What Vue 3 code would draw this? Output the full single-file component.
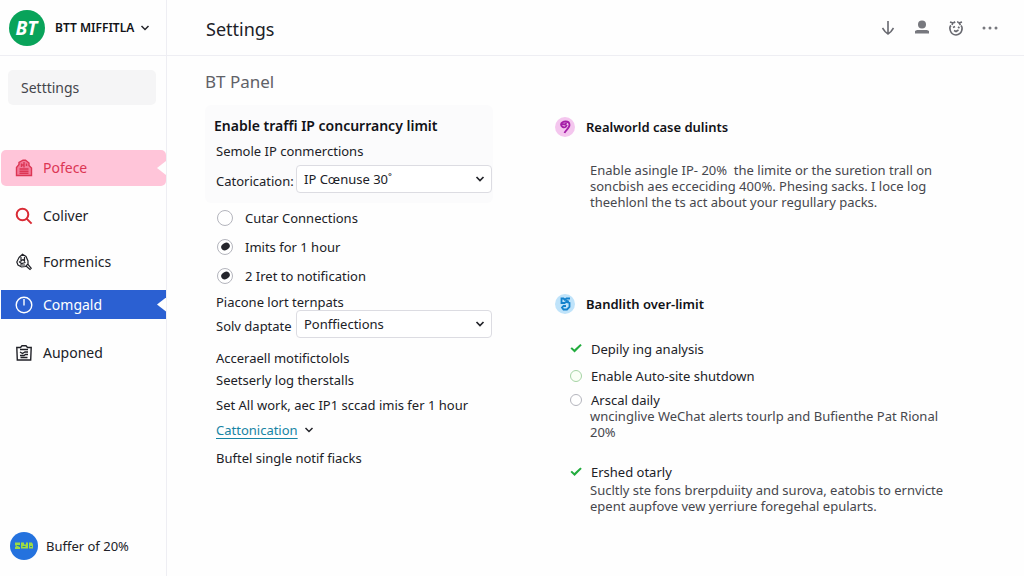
<script setup>
import { ref } from 'vue'

const nav = [
  { label: 'Pofece', icon: 'bag', tone: 'pink' },
  { label: 'Coliver', icon: 'search', tone: 'plain' },
  { label: 'Formenics', icon: 'inspect', tone: 'plain' },
  { label: 'Comgald', icon: 'clock', tone: 'blue' },
  { label: 'Auponed', icon: 'board', tone: 'plain' },
]

const radios = ref([
  { label: 'Cutar Connections', on: false },
  { label: 'Imits for 1 hour', on: true },
  { label: '2 Iret to notification', on: true },
])

const category = ref('IP Cœnuse 30˚')
const template = ref('Ponffiections')
</script>

<template>
  <div class="app">
    <aside class="sidebar">
      <button class="brand" type="button">
        <svg class="logo" viewBox="0 0 36 36" aria-hidden="true">
          <circle cx="18" cy="18" r="18" fill="#09a35a" />
          <text x="17.500" y="25" text-anchor="middle" class="logo-text">BT</text>
        </svg>
        <span>BTT MIFFITLA</span>
        <svg class="chev" viewBox="0 0 10 10" aria-hidden="true"><path d="M1.500 3 5 6.500 8.500 3" /></svg>
      </button>

      <a class="side-title" href="#settings">Setttings</a>

      <nav class="nav">
        <a v-for="n in nav" :key="n.label" href="#" :class="['item', n.tone]">
          <svg v-if="n.icon === 'bag'" class="ico" viewBox="0 0 18 18" aria-hidden="true">
            <path d="M1.500 16.500V8.500L4 5.500V3.500L8 1.200h2.500l3.500 2.800v2.500L16.500 9v7.500z" fill="#f27b9a" />
            <path d="M4.500 10h9M4.500 12.200h9M4.500 14.300h9M6.500 4.500v3.500M9 3v5.500M11.500 4.500V7M6.500 6h3" />
          </svg>
          <svg v-else-if="n.icon === 'search'" class="ico red" viewBox="0 0 18 18" aria-hidden="true">
            <circle cx="7.500" cy="7.500" r="5.800" /><path d="m11.600 11.600 5 5" />
          </svg>
          <svg v-else-if="n.icon === 'inspect'" class="ico thin" viewBox="0 0 18 18" aria-hidden="true">
            <path d="M4 4.500 7.500 1.200 11 3.500l2 4.500v3l-2.500 2.500-4 .5-3.500-2L1.800 9z" />
            <path d="M6 4v4l2-1.500L9.500 8V4M4 8.500l2.500 2 4-1M5 12h5M11 13l4 3.500 1.200-1.200-3.200-4" />
          </svg>
          <svg v-else-if="n.icon === 'clock'" class="ico" viewBox="0 0 18 18" aria-hidden="true">
            <circle cx="9" cy="9" r="7.800" /><path d="M9 3v6.500" />
          </svg>
          <svg v-else class="ico" viewBox="0 0 18 18" aria-hidden="true">
            <path d="M1.800 3.500h3.700L7 1.800h4l1.500 1.700h3.700l-.5 12.500H2.300z" />
            <path d="M5 5.500h8M5 8l2.500 1.500L10 8h3M5 11.500h4l1.500-1h2.500M5.500 13.500h7" />
          </svg>
          <span>{{ n.label }}</span>
        </a>
      </nav>

      <div class="account">
        <svg class="avatar" viewBox="0 0 28 28" aria-hidden="true">
          <circle cx="14" cy="14" r="14" fill="#2472de" />
          <path d="M5 10.500h5v3l-2 1.500h2v2H5v-2l2-1.500H5zM11 10.500h3v2h2v-2h2v6h-7zM19 10.500h3l1 2v4h-4z" fill="#9ddb45" />
          <path d="M7 13.500h3M12.500 14.500h3M20 14.500h2" stroke="#2a8a9a" />
        </svg>
        <span>Buffer of 20%</span>
      </div>
    </aside>

    <main class="main">
      <header class="top">
        <h1>Settings</h1>
        <div class="tools">
          <button type="button" aria-label="Download">
            <svg viewBox="0 0 16 16"><path class="ln" d="M8 1v13M2.500 8 5 11.500l3 2.500 3-2.500L13.500 8" /></svg>
          </button>
          <button type="button" aria-label="Profile">
            <svg viewBox="0 0 16 16"><circle cx="8" cy="4.500" r="4" /><path d="M3 10h10l2 1v2.500H1V11z" /></svg>
          </button>
          <button type="button" aria-label="Assistant">
            <svg viewBox="0 0 16 16">
              <path class="ln" d="M3 5.500C1 7 1.500 14.500 8 15c6.500-.5 7-7.500 5-9.500M2 2l3 1-1 2M14 2l-3 1 1.500 2M6 1.500l1 1.500M9 2h1.500M5 7.500l2-1M10 7l1.500 1M6 10.500l2 1 2.500-1.500" />
            </svg>
          </button>
          <button type="button" aria-label="More">
            <svg viewBox="0 0 16 16"><circle cx="2" cy="8" r="1.500" /><circle cx="8" cy="8" r="1.500" /><circle cx="14" cy="8" r="1.500" /></svg>
          </button>
        </div>
      </header>

      <div class="content">
        <section class="left">
          <h2>BT Panel</h2>
          <div class="card">
            <h3>Enable traffi IP concurrancy limit</h3>
            <p>Semole IP conmerctions</p>
            <div class="field">
              <label for="cat">Catorication:</label>
              <span class="pick">
                <select id="cat" v-model="category"><option>IP Cœnuse 30˚</option></select>
                <svg class="chev" viewBox="0 0 10 10" aria-hidden="true"><path d="M1.500 3 5 6.500 8.500 3" /></svg>
              </span>
            </div>
          </div>

          <div class="group">
            <label v-for="(r, i) in radios" :key="r.label" class="radio">
              <input type="radio" :name="'limit' + i" :checked="r.on" />
              <span>{{ r.label }}</span>
            </label>
            <p class="caption">Piacone lort ternpats</p>
            <div class="field">
              <label for="tpl">Solv daptate</label>
              <span class="pick">
                <select id="tpl" v-model="template"><option>Ponffiections</option></select>
                <svg class="chev" viewBox="0 0 10 10" aria-hidden="true"><path d="M1.500 3 5 6.500 8.500 3" /></svg>
              </span>
            </div>
            <div class="lines">
              <p>Acceraell motifictolols</p>
              <p>Seetserly log therstalls</p>
              <p class="gap">Set All work, aec IP1 sccad imis fer 1 hour</p>
              <p class="gap">
                <a href="#">Cattonication</a>
                <svg class="chev" viewBox="0 0 10 10" aria-hidden="true"><path d="M1.500 3 5 6.500 8.500 3" /></svg>
              </p>
              <p class="wide">Buftel single notif fiacks</p>
            </div>
          </div>
        </section>

        <section class="right">
          <article class="case">
            <h3>
              <svg class="badge" viewBox="0 0 22 22" aria-hidden="true">
                <circle cx="11" cy="11" r="10" fill="#f4c6ee" />
                <path d="M10.500 17c.5-2 5-5 5-8 0-2.500-2-3.500-4-3.500S7 6.500 7 8.500s2.500 3.500 4.500 2.500L13 9M8 8l3 .5L12.500 7" fill="none" stroke="#a51fa8" stroke-width="1.800" />
              </svg>
              Realworld case dulints
            </h3>
            <p class="body">
              Enable asingle IP- 20%&nbsp; the limite or the suretion trall on<br />
              soncbish aes ecceciding 400%. Phesing sacks. I loce log<br />
              theehlonl the ts act about your regullary packs.
            </p>
          </article>

          <article>
            <h3>
              <svg class="badge" viewBox="0 0 22 22" aria-hidden="true">
                <circle cx="11" cy="11" r="10" fill="#bfe3fa" />
                <path d="M16 5.500h-3.500L11 7 9.500 5.500H7.500V10h3l1.500-1 3.500 1v4L13 16.500H9.500L8 14.500l1.500-1.500H12M12 7.500l3 1" fill="none" stroke="#1482cc" stroke-width="1.800" />
              </svg>
              Bandlith over-limit
            </h3>
            <div class="checks">
              <label><input type="checkbox" checked /><span>Depily ing analysis</span></label>
              <label class="green"><input type="checkbox" /><span>Enable Auto-site shutdown</span></label>
              <label class="tight"><input type="checkbox" /><span>Arscal daily</span></label>
              <p>wncinglive WeChat alerts tourlp and Bufienthe Pat Rional<br />20%</p>
              <label class="last"><input type="checkbox" checked /><span>Ershed otarly</span></label>
              <p>Sucltly ste fons brerpduiity and surova, eatobis to ernvicte<br />epent aupfove vew yerriure foregehal epularts.</p>
            </div>
          </article>
        </section>
      </div>
    </main>
  </div>
</template>

<style>
body { margin: 0; }
</style>

<style scoped>
.app {
  display: flex;
  min-height: 100vh;
  background: #fefefe;
  color: #202127;
  font: 13px/20px "Noto Sans", "Open Sans", sans-serif;
}
h1, h2, h3, p { margin: 0; font-weight: 400; }
a { color: inherit; text-decoration: none; }
button { border: 0; padding: 0; background: none; font: inherit; color: inherit; }
.chev { width: 10px; height: 10px; fill: none; stroke: #23242a; stroke-width: 1.5px; }

.sidebar {
  flex: 0 0 166px;
  display: flex;
  flex-direction: column;
  border-right: 1px solid #eeeef3;
}
.brand {
  display: flex;
  align-items: center;
  height: 56px;
  padding-left: 9px;
  border-bottom: 1px solid #eeeef3;
  font-size: 12px;
  font-weight: 600;
  color: #111217;
  white-space: nowrap;
}
.brand span { margin: 0 6px 0 10px; }
.logo { width: 36px; height: 36px; flex: none; }
.logo-text { font: italic 700 19px "Open Sans", sans-serif; fill: #fff; }
.side-title {
  margin: 14px 10px 0 8px;
  padding: 0 13px;
  border-radius: 5px;
  background: #f5f5f6;
  color: #44454b;
  font-size: 14px;
  line-height: 35px;
}
.nav { display: flex; flex-direction: column; padding: 45px 0 0 1px; }
.item {
  position: relative;
  display: flex;
  align-items: center;
  gap: 10px;
  height: 29px;
  margin-bottom: 17px;
  padding-left: 14px;
  font-size: 14px;
}
.item:nth-child(3) { margin-bottom: 14px; }
.ico { width: 18px; height: 18px; fill: none; stroke: currentColor; stroke-width: 1.4px; }
.ico.thin { stroke-width: 1.2px; }
.ico.red { stroke: #d92b35; stroke-width: 2px; }
.pink { height: 36px; margin-bottom: 15px; border-radius: 5px; background: #ffc5d9; color: #dc3654; }
.blue { margin-bottom: 19px; background: #2b60d2; color: #fff; }
.pink::after, .blue::after {
  content: "";
  position: absolute;
  right: 0;
  top: calc(50% - 7px);
  width: 9px;
  height: 14px;
  background: #fefefe;
  clip-path: polygon(0 50%, 100% 0, 100% 100%);
}
.account { display: flex; align-items: center; gap: 8px; margin-top: auto; padding: 0 0 16px 10px; white-space: nowrap; }
.avatar { width: 28px; height: 28px; }

.main { flex: 1; min-width: 0; }
.top {
  display: flex;
  align-items: center;
  justify-content: space-between;
  height: 55px;
  padding: 0 26px 0 39px;
  border-bottom: 1px solid #eeeef3;
}
h1 { font-size: 18px; line-height: 24px; padding-top: 3px; }
.tools { display: flex; gap: 18px; }
.tools button { width: 16px; height: 16px; }
.tools svg { display: block; width: 16px; height: 16px; fill: #77787e; }
.tools .ln { fill: none; stroke: #686970; stroke-width: 1.6px; }

.content { display: flex; gap: 61px; padding: 14px 25px 24px 38px; }
.left { flex: 0 0 288px; }
h2 { font-size: 17px; line-height: 24px; color: #606167; }
.card { margin-top: 11px; padding: 10px 1px 10px 9px; border-radius: 6px; background: #fbfbfc; }
h3 { font-size: 14px; line-height: 22px; font-weight: 600; color: #111217; white-space: nowrap; }
.card p { margin-top: 4px; padding-left: 2px; }
.card .field { margin-top: 4px; padding-left: 2px; }
.group { padding: 0 1px 0 11px; }
.field { display: flex; }
.field label { flex: 0 0 80px; padding-top: 6px; white-space: nowrap; }
.pick { flex: 1; display: grid; align-items: center; }
.pick select, .pick .chev { grid-area: 1 / 1; }
.pick .chev { justify-self: end; margin-right: 7px; pointer-events: none; stroke-width: 1.7px; }
select {
  appearance: none;
  width: 100%;
  height: 28px;
  padding: 0 24px 0 7px;
  border: 1px solid #dcdce2;
  border-radius: 4px;
  background: #fff;
  color: inherit;
  font: inherit;
}
.radio { display: flex; align-items: center; gap: 12px; height: 29px; }
.radio input {
  appearance: none;
  display: grid;
  place-items: center;
  width: 16px;
  height: 16px;
  margin: 0 0 0 1px;
  border: 1px solid #b4b5bd;
  border-radius: 50%;
  background: #fff;
}
.radio input:checked::before {
  content: "";
  width: 9px;
  height: 7px;
  border-radius: 50%;
  background: #25262c;
  rotate: -30deg;
}
.caption { padding-top: 4px; line-height: 16px; }
.lines { padding-top: 10px; white-space: nowrap; }
.lines p + p { margin-top: 2px; }
.lines p.gap { margin-top: 5px; }
.lines p.wide { margin-top: 8px; }
.lines a { color: #1684a4; text-decoration: underline; text-underline-offset: 3px; }
.lines .chev { margin-left: 6px; }

.right { flex: 1; min-width: 0; padding-top: 46px; }
.right h3 { display: flex; align-items: center; gap: 10px; font-size: 13px; }
.badge { width: 22px; height: 22px; }
.case { min-height: 177px; }
.body { padding: 24px 0 0 36px; line-height: 16px; color: #46474d; white-space: nowrap; }
.checks { padding: 20px 0 0 16px; white-space: nowrap; }
.checks label { display: flex; align-items: center; gap: 9px; height: 27px; line-height: 16px; }
.checks label.tight { height: 16px; padding-top: 3px; }
.checks label.last { height: 16px; padding-top: 24px; margin-bottom: 2px; }
.checks p { padding-left: 20px; line-height: 16px; color: #46474d; }
.checks input {
  appearance: none;
  width: 12px;
  height: 12px;
  margin: 0;
  border: 1px solid #b4b5bd;
  border-radius: 50%;
  background: #fff;
}
.checks .green input { border-color: #a5d3a5; background: #fafff6; }
.checks input:checked {
  border: 0;
  border-radius: 0;
  background: #22ac3e;
  clip-path: polygon(4% 50%, 16% 40%, 36% 58%, 86% 12%, 98% 22%, 38% 84%);
}
</style>
